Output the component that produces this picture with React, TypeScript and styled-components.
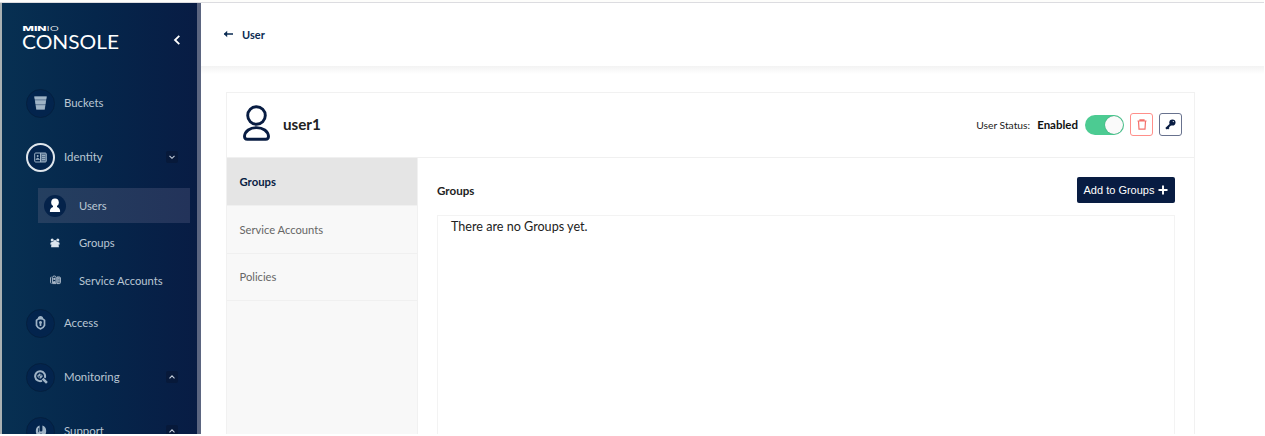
import React from "react";
import styled, { createGlobalStyle, css } from "styled-components";

const GlobalStyle = createGlobalStyle`
  * { box-sizing: border-box; }
  body { margin: 0; background: #fff; font-family: Lato, "Liberation Sans", sans-serif; overflow: hidden; }
`;

const Window = styled.div`
  width: 1264px;
  height: 434px;
  display: flex;
  flex-direction: column;
  overflow: hidden;
  background: #fff;
`;
const TopEdge = styled.div`
  flex: none;
  height: 3px;
  background: #fdfdfb;
  border-bottom: 1px solid #dcdce0;
`;
const Shell = styled.div`
  flex: 1;
  min-height: 0;
  display: flex;
`;
const Sidebar = styled.aside`
  flex: none;
  width: 201px;
  border-left: 2px solid #a9b1b3;
  border-right: 4px solid #5b6580;
  background: linear-gradient(90deg, #073052 0%, #05264b 48%, #081c44 100%);
  overflow: hidden;
`;
const Brand = styled.div`
  height: 73px;
  padding: 20px 16px 0 20px;
  display: flex;
  justify-content: space-between;
`;
const Collapse = styled.svg`
  margin-top: 10px;
`;
const NavItem = styled.div`
  height: 54px;
  padding: 0 19px 0 24px;
  display: flex;
  align-items: center;
  color: #b9c6d3;
  font-size: 11.4px;
`;
const NavIcon = styled.span<{ $active?: boolean }>`
  width: 29px;
  height: 29px;
  margin-right: 9px;
  border-radius: 50%;
  display: flex;
  align-items: center;
  justify-content: center;
  background: #03244d;
  border: ${(p) => (p.$active ? "2px solid #dfe6ec" : "1px solid #04203f")};
  color: #9fb3c6;
`;
const NavLabel = styled.span`
  flex: 1;
  padding-bottom: 1px;
`;
const Toggle = styled.span`
  width: 12px;
  height: 12px;
  border-radius: 2px;
  background: #07193a;
  display: flex;
  align-items: center;
  justify-content: center;
`;
const SubNav = styled.div`
  margin: 4px 7px 0 36px;
  height: 108px;
`;
const SubItem = styled.div<{ $active?: boolean }>`
  height: ${(p) => (p.$active ? "35px" : "37.5px")};
  padding-left: 6px;
  display: flex;
  align-items: center;
  color: #b9c6d3;
  font-size: 11.2px;
  ${(p) => p.$active && css`
    margin-bottom: 1px;
    background: linear-gradient(90deg, #243f60, #23335a);
  `}
`;
const SubIcon = styled.span<{ $active?: boolean }>`
  width: 22px;
  height: 22px;
  margin-right: 13px;
  border-radius: 50%;
  display: flex;
  align-items: center;
  justify-content: center;
  color: #dbe4ec;
  background: ${(p) => (p.$active ? "#04224a" : "transparent")};
`;
const Main = styled.main`
  flex: 1;
  min-width: 0;
  display: flex;
  flex-direction: column;
`;
const Header = styled.header`
  flex: none;
  height: 63px;
  padding: 0 0 1px 22px;
  display: flex;
  align-items: center;
  gap: 8px;
  color: #0a2b52;
  font-size: 11px;
  font-weight: 700;
`;
const HeaderShade = styled.div`
  flex: none;
  height: 8px;
  background: linear-gradient(#f3f3f3, #fff);
`;
const Card = styled.section`
  flex: 1;
  min-height: 0;
  width: 969px;
  margin: 18px 0 0 25px;
  border: 1px solid #f1f1f1;
  border-bottom: 0;
  display: flex;
  flex-direction: column;
`;
const CardHead = styled.div`
  flex: none;
  height: 65px;
  padding: 0 12px 1px 16px;
  border-bottom: 1px solid #f0f0f0;
  display: flex;
  align-items: center;
`;
const UserGlyph = styled.svg`
  margin-bottom: 4px;
`;
const UserName = styled.h1`
  flex: 1;
  margin: 0 0 0 13px;
  padding-bottom: 2px;
  color: #222;
  font-size: 15.2px;
  font-weight: 700;
`;
const StatusLabel = styled.span`
  color: #222;
  font-size: 10.3px;
`;
const StatusValue = styled.strong`
  margin: 0 7px 0 7px;
  color: #111;
  font-size: 11.5px;
`;
const Switch = styled.span`
  width: 39px;
  height: 20px;
  padding: 1px;
  border-radius: 10px;
  background: #4ccb92;
  display: flex;
  justify-content: flex-end;
`;
const Knob = styled.span`
  width: 18px;
  height: 18px;
  border-radius: 50%;
  background: #fafafa;
  box-shadow: 0 0 1px #287e58;
`;
const IconButton = styled.button<{ $color: string }>`
  width: 23px;
  height: 23px;
  margin-left: 6px;
  padding: 0;
  border: 1px solid ${(p) => p.$color};
  border-radius: 3px;
  background: #fff;
  display: flex;
  align-items: center;
  justify-content: center;
`;
const CardBody = styled.div`
  flex: 1;
  min-height: 0;
  display: flex;
`;
const Tabs = styled.nav`
  width: 191px;
  background: #f8f8f8;
  border-right: 1px solid #f1f1f1;
`;
const Tab = styled.div<{ $active?: boolean }>`
  height: 47.8px;
  padding: 0 0 0 12.5px;
  border-bottom: 1px solid #f0f0f0;
  display: flex;
  align-items: center;
  font-size: ${(p) => (p.$active ? "11.3px" : "11.2px")};
  color: ${(p) => (p.$active ? "#081c42" : "#666")};
  font-weight: ${(p) => (p.$active ? 700 : 400)};
  background: ${(p) => (p.$active ? "#e5e5e5" : "transparent")};
`;
const Panel = styled.div`
  flex: 1;
  padding: 19px 19px 0;
  display: flex;
  flex-direction: column;
`;
const PanelHead = styled.div`
  display: flex;
  align-items: center;
  justify-content: space-between;
  height: 26px;
`;
const PanelTitle = styled.h2`
  margin: 0;
  color: #222;
  font-size: 11.6px;
`;
const AddButton = styled.button`
  width: 98px;
  height: 26px;
  padding: 0;
  border: 0;
  border-radius: 2px;
  background: #081c42;
  color: #fff;
  font: 11px "Liberation Sans", sans-serif;
  display: flex;
  align-items: center;
  justify-content: center;
  gap: 4px;
`;
const List = styled.div`
  flex: 1;
  margin-top: 12px;
  padding: 2px 13px;
  border: 1px solid #f3f3f3;
  border-bottom: 0;
  color: #222;
  font-size: 12.6px;
  line-height: 17px;
`;

const Chevron = ({ up }: { up?: boolean }) => (
  <Toggle>
    <svg width="8" height="6" viewBox="0 0 8 6" fill="none" stroke="#c5cedb" strokeWidth="1.1">
      <path d={up ? "M1.5 4.3 4 1.8 6.5 4.3" : "M1.5 1.8 4 4.3 6.5 1.8"} />
    </svg>
  </Toggle>
);

const BucketIcon = () => (
  <svg width="13" height="14" viewBox="0 0 13 14" fill="currentColor">
    <path d="M.3.5h12.4l-1.9 13H2.2z" opacity=".65" />
    <path d="M.3.5h12.4l-.5 2.8H.8zM1 4.5h11l-.6 3.5H1.6zM1.8 9.2h9.4l-.6 4.3H2.4z" />
  </svg>
);
const IdentityIcon = () => (
  <svg width="13" height="11" viewBox="0 0 13 11" fill="none" stroke="currentColor">
    <rect x=".7" y="1" width="11.6" height="9" rx="1" />
    <path d="M6.5 1v9" />
    <circle cx="3.7" cy="4" r="1" fill="currentColor" stroke="none" />
    <path d="M1.8 7.5q1.9-3 3.8 0z" fill="currentColor" strokeWidth=".6" />
    <path d="M7 1h5v9H7z" fill="currentColor" stroke="none" opacity=".55" />
    <path d="M8 3.5h3.2M8 5.5h3.2M8 7.5h3.2" strokeWidth=".9" />
  </svg>
);
const UserIcon = () => (
  <svg width="12" height="15" viewBox="0 0 12 15" fill="#fff">
    <circle cx="6" cy="4.4" r="3.8" />
    <path d="M4 7h4v2.5H4z" />
    <path d="M1.2 14Q.8 14 .9 12.8C1.2 10 3.2 8.7 6 8.7s4.8 1.3 5.1 4.1q.1 1.2-.3 1.2z" />
  </svg>
);
const GroupsIcon = () => (
  <svg width="10" height="10" viewBox="0 0 10 10" fill="currentColor">
    <circle cx="2.2" cy="2.1" r="1.5" />
    <circle cx="7.8" cy="2.1" r="1.5" />
    <circle cx="5" cy="3.9" r="1.9" />
    <path d="M.2 6.4Q.2 3.8 2.4 4h5.2q2.2-.2 2.2 2.4H8.6l.3 2.9H1.1l.3-2.9z" />
  </svg>
);
const AccountsIcon = () => (
  <svg width="11" height="10" viewBox="0 0 11 10" fill="none" stroke="#a9b7c7">
    <path d="M1.4 2Q.6 2 .6 3v4.4q0 1 .8 1M2.6 8.6V2.4Q2.6 1 4.3 1T6 2.4v6.2z" />
    <circle cx="4.3" cy="3.9" r="1.1" fill="#a9b7c7" stroke="none" />
    <path d="M3 8V6.8q1.3-1.5 2.6 0V8z" fill="#a9b7c7" stroke="none" />
    <path d="M7 2h2.4q1 0 1 1v4.6q0 1-1 1H7z" fill="#a9b7c7" fillOpacity=".45" />
    <path d="M7.8 3.8h1.8M7.8 6h1.8" />
  </svg>
);
const AccessIcon = () => (
  <svg width="11" height="14" viewBox="0 0 11 14" fill="none" stroke="currentColor" strokeWidth="1.7">
    <path d="M3.7 2.6Q3.7.9 5.5.9t1.8 1.7M5.5 2.7Q8.2 2.7 9.5 4.2v5.2Q8.2 12.3 5.5 12.9 2.8 12.3 1.5 9.4V4.2Q2.8 2.7 5.5 2.7z" />
    <circle cx="5.5" cy="6.4" r="1.4" fill="currentColor" stroke="none" />
    <path d="M5.5 6v4" />
  </svg>
);
const MonitoringIcon = () => (
  <svg width="14" height="14" viewBox="0 0 13 13" fill="none" stroke="currentColor">
    <path d="M10 7.3A4.6 4.6 0 1 0 7.4 10" strokeWidth="1.9" />
    <path d="m8 8 4 4" strokeWidth="2.4" />
    <path d="M3 5.6h1.2l1-1.4 1 2.8 1-1.4H8" strokeWidth="1" />
    <circle cx="5.6" cy="5.7" r="1.8" strokeWidth=".6" />
  </svg>
);
const SupportIcon = () => (
  <svg width="12" height="13" viewBox="0 0 12 13" fill="currentColor">
    <path d="M4.6.5v4.8q0 1.3 1.4 1.3t1.4-1.3V.5Q11.2 1.5 11.2 6 11.2 11 6 12.6.8 11 .8 6 .8 1.5 4.6.5z" />
    <path d="M6 8.2v3M3.6 3.2v4" stroke="#03244d" strokeWidth=".8" />
  </svg>
);

export default function App() {
  return (
    <>
      <GlobalStyle />
      <Window>
        <TopEdge />
        <Shell>
          <Sidebar>
            <Brand>
              <svg width="100" height="30" viewBox="0 0 100 30" fill="#fff">
                <text transform="translate(0.5 8.2) scale(1.78 1)" fontFamily="Inter, sans-serif" fontSize="6.8" fontWeight="800">
                  MIN<tspan fontWeight="300">IO</tspan>
                </text>
                <text x="0" y="26" fontFamily="Lato, sans-serif" fontSize="19.2" textLength="97" lengthAdjust="spacingAndGlyphs">CONSOLE</text>
              </svg>
              <Collapse width="8" height="14" viewBox="0 0 8 14" fill="none" stroke="#fff" strokeWidth="1.8">
                <path d="M6.3 2.8 2 7l4.3 4.2" />
              </Collapse>
            </Brand>
            <NavItem><NavIcon><BucketIcon /></NavIcon><NavLabel>Buckets</NavLabel></NavItem>
            <NavItem><NavIcon $active><IdentityIcon /></NavIcon><NavLabel>Identity</NavLabel><Chevron /></NavItem>
            <SubNav>
              <SubItem $active><SubIcon $active><UserIcon /></SubIcon>Users</SubItem>
              <SubItem><SubIcon><GroupsIcon /></SubIcon>Groups</SubItem>
              <SubItem><SubIcon><AccountsIcon /></SubIcon>Service Accounts</SubItem>
            </SubNav>
            <NavItem><NavIcon><AccessIcon /></NavIcon><NavLabel>Access</NavLabel></NavItem>
            <NavItem><NavIcon><MonitoringIcon /></NavIcon><NavLabel>Monitoring</NavLabel><Chevron up /></NavItem>
            <NavItem><NavIcon><SupportIcon /></NavIcon><NavLabel>Support</NavLabel><Chevron up /></NavItem>
          </Sidebar>
          <Main>
            <Header>
              <svg width="11" height="8" viewBox="0 0 11 8" fill="none" stroke="#0a2b52" strokeWidth="1.5">
                <path d="M1.3 4H10" />
                <path d="M4.2.8.8 4l3.4 3.2z" fill="#0a2b52" stroke="none" />
              </svg>
              User
            </Header>
            <HeaderShade />
            <Card>
              <CardHead>
                <UserGlyph width="27" height="36" viewBox="0 0 27 36" fill="none" stroke="#081c42" strokeWidth="2.9">
                  <circle cx="13.5" cy="10.5" r="8.8" />
                  <path d="M4.3 34.2h18.4q2.8 0 2.8-3C25 26 20 22.6 13.5 22.6S2 26 1.5 31.2q0 3 2.8 3z" />
                </UserGlyph>
                <UserName>user1</UserName>
                <StatusLabel>User Status:</StatusLabel>
                <StatusValue>Enabled</StatusValue>
                <Switch><Knob /></Switch>
                <IconButton $color="#ff8f8a" aria-label="Delete user">
                  <svg width="10" height="11" viewBox="0 0 10 11" fill="none" stroke="#f4706b" strokeWidth="1.2">
                    <path d="M.5 2h9M3 1.7V.8h4v.9M1.5 2l.5 8.2h6L8.5 2" />
                  </svg>
                </IconButton>
                <IconButton $color="#68728e" aria-label="Change password">
                  <svg width="11" height="11" viewBox="0 0 11 11">
                    <circle cx="7.4" cy="3.5" r="3.1" fill="#081c42" />
                    <path d="M6 5 1 9.8M2.3 8.2l1.5 1.5" stroke="#081c42" strokeWidth="2" />
                    <circle cx="8.3" cy="2.6" r=".6" fill="#fff" />
                  </svg>
                </IconButton>
              </CardHead>
              <CardBody>
                <Tabs>
                  <Tab $active>Groups</Tab>
                  <Tab>Service Accounts</Tab>
                  <Tab>Policies</Tab>
                </Tabs>
                <Panel>
                  <PanelHead>
                    <PanelTitle>Groups</PanelTitle>
                    <AddButton>
                      Add to Groups
                      <svg width="10" height="10" viewBox="0 0 10 10" stroke="#fff" strokeWidth="1.9"><path d="M5 .5v9M.5 5h9" /></svg>
                    </AddButton>
                  </PanelHead>
                  <List>There are no Groups yet.</List>
                </Panel>
              </CardBody>
            </Card>
          </Main>
        </Shell>
      </Window>
    </>
  );
}
